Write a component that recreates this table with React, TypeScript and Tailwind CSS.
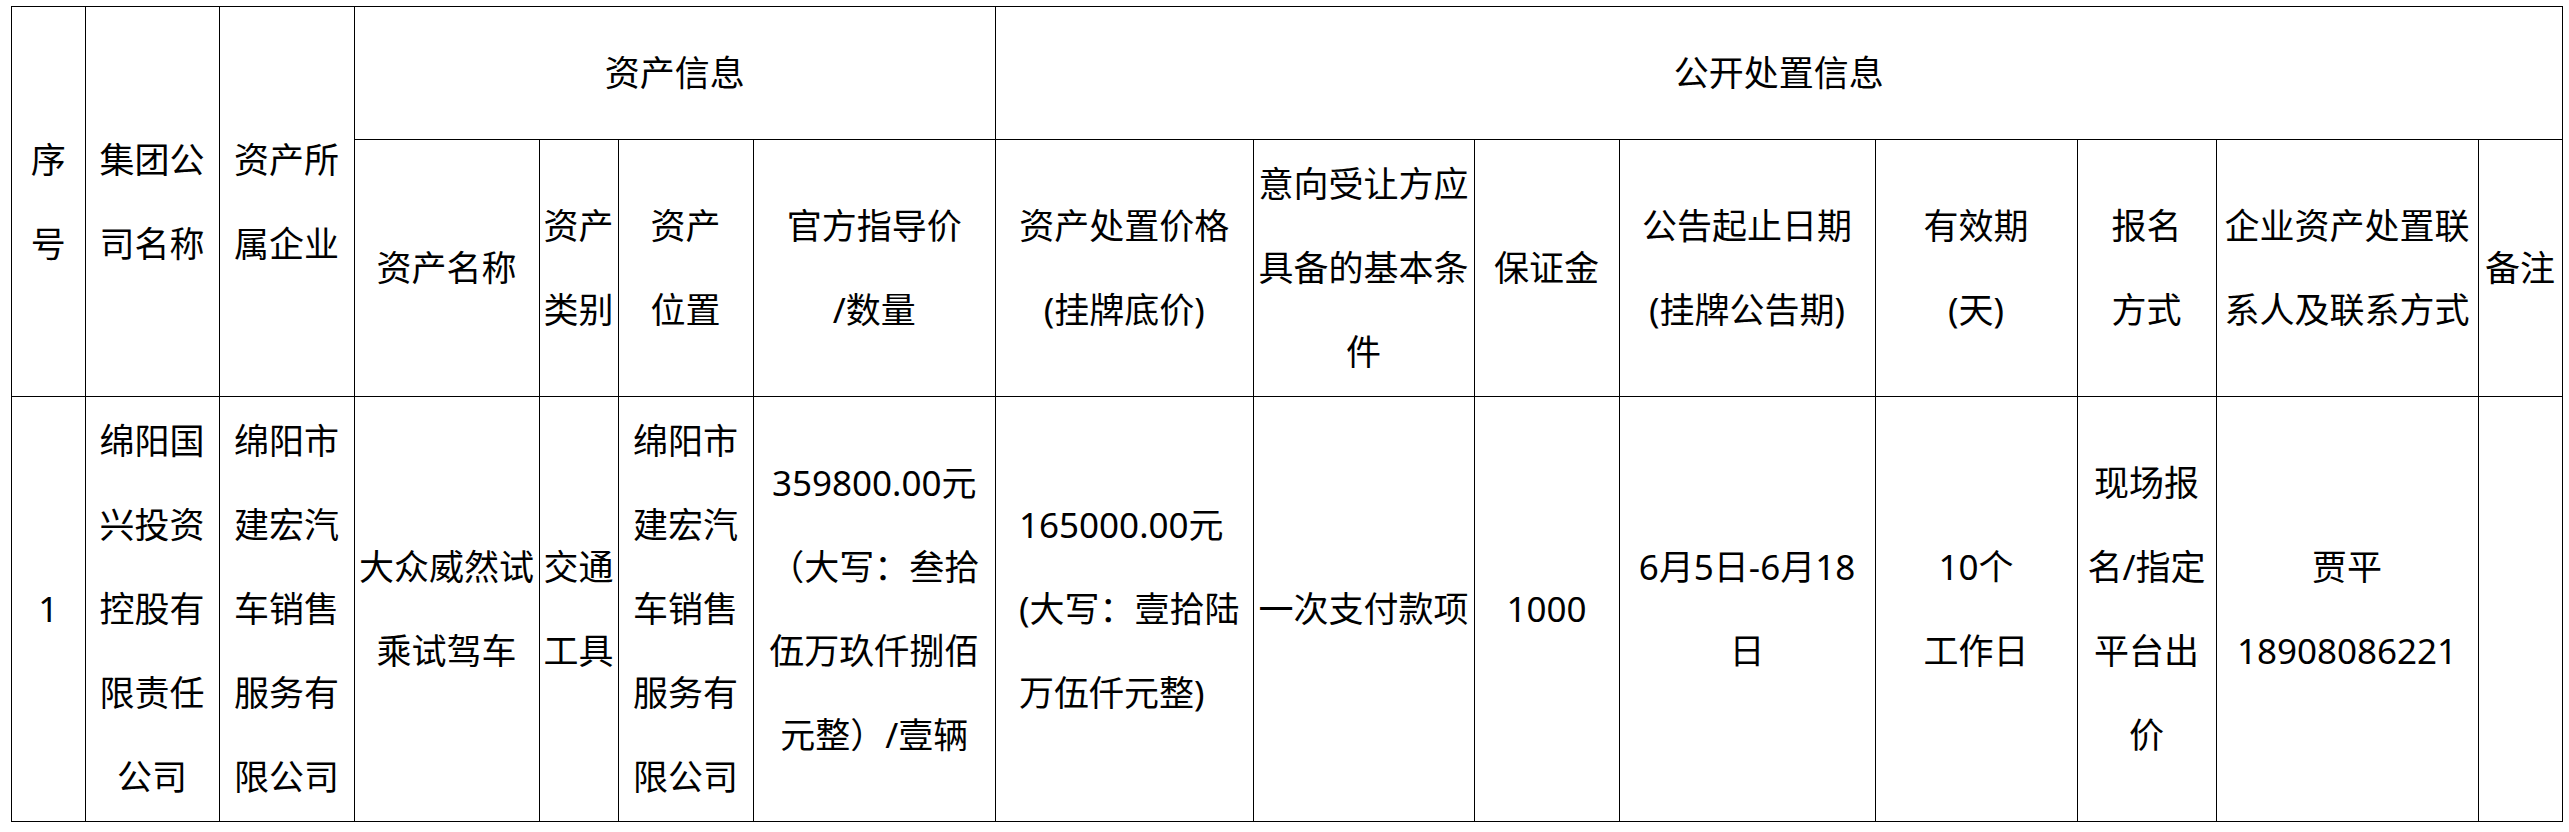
import React from "react";

type CellProps = {
    lines: string[];
    rowSpan?: number;
    colSpan?: number;
    className?: string;
};

function Cell({ lines, rowSpan, colSpan, className = "" }: CellProps) {
    return (
        <td rowSpan={rowSpan} colSpan={colSpan} className={`border border-black p-0 text-center align-middle ${className}`}>
            {lines.map((line, i) => (
                <span key={i} className="block whitespace-nowrap">
                    {line}
                </span>
            ))}
        </td>
    );
}

export default function App() {
    return (
        <div className="min-h-screen bg-white pl-[11px] pt-[6px] text-black">
            <table className="w-[2551px] table-fixed border-collapse font-['Noto_Sans','Noto_Sans_CJK_SC',sans-serif] text-[35px] leading-[84px]">
                <colgroup>
                    <col className="w-[73.5px]" />
                    <col className="w-[134px]" />
                    <col className="w-[135px]" />
                    <col className="w-[185px]" />
                    <col className="w-[79px]" />
                    <col className="w-[135px]" />
                    <col className="w-[242.5px]" />
                    <col className="w-[257.5px]" />
                    <col className="w-[221px]" />
                    <col className="w-[145px]" />
                    <col className="w-[256px]" />
                    <col className="w-[202px]" />
                    <col className="w-[139px]" />
                    <col className="w-[262px]" />
                    <col className="w-[84px]" />
                </colgroup>
                <tbody>
                    <tr className="h-[133px]">
                        <Cell rowSpan={2} lines={["序", "号"]} />
                        <Cell rowSpan={2} lines={["集团公", "司名称"]} />
                        <Cell rowSpan={2} lines={["资产所", "属企业"]} />
                        <Cell colSpan={4} lines={["资产信息"]} />
                        <Cell colSpan={8} lines={["公开处置信息"]} />
                    </tr>
                    <tr className="h-[257px]">
                        <Cell lines={["资产名称"]} />
                        <Cell lines={["资产", "类别"]} />
                        <Cell lines={["资产", "位置"]} />
                        <Cell lines={["官方指导价", "/数量"]} />
                        <Cell lines={["资产处置价格", "(挂牌底价)"]} />
                        <Cell lines={["意向受让方应", "具备的基本条", "件"]} />
                        <Cell lines={["保证金"]} />
                        <Cell lines={["公告起止日期", "(挂牌公告期)"]} />
                        <Cell lines={["有效期", "(天)"]} />
                        <Cell lines={["报名", "方式"]} />
                        <Cell lines={["企业资产处置联", "系人及联系方式"]} />
                        <Cell lines={["备注"]} />
                    </tr>
                    <tr className="h-[425px]">
                        <Cell lines={["1"]} />
                        <Cell lines={["绵阳国", "兴投资", "控股有", "限责任", "公司"]} />
                        <Cell lines={["绵阳市", "建宏汽", "车销售", "服务有", "限公司"]} />
                        <Cell lines={["大众威然试", "乘试驾车"]} />
                        <Cell lines={["交通", "工具"]} />
                        <Cell lines={["绵阳市", "建宏汽", "车销售", "服务有", "限公司"]} />
                        <Cell lines={["359800.00元", "（大写：叁拾", "伍万玖仟捌佰", "元整）/壹辆"]} />
                        <Cell className="!text-left pl-[23px]" lines={["165000.00元", "(大写：壹拾陆", "万伍仟元整)"]} />
                        <Cell lines={["一次支付款项"]} />
                        <Cell lines={["1000"]} />
                        <Cell lines={["6月5日-6月18", "日"]} />
                        <Cell lines={["10个", "工作日"]} />
                        <Cell lines={["现场报", "名/指定", "平台出", "价"]} />
                        <Cell lines={["贾平", "18908086221"]} />
                        <Cell lines={[]} />
                    </tr>
                </tbody>
            </table>
        </div>
    );
}
